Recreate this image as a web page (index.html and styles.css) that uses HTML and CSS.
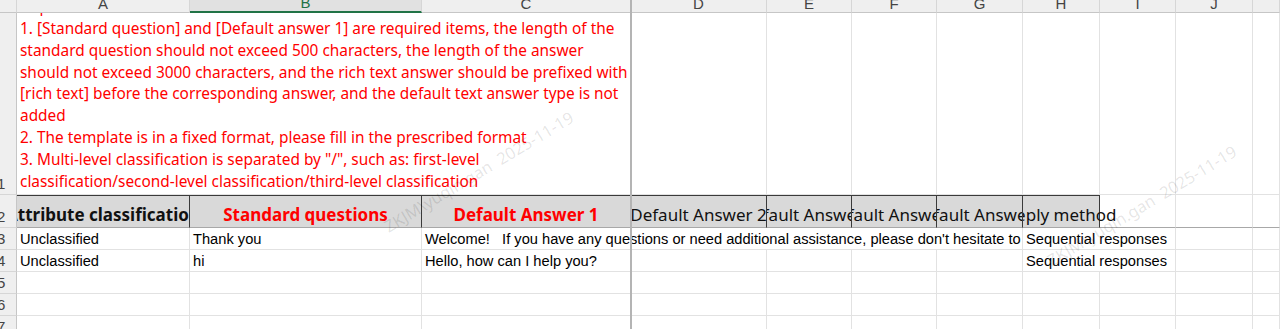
FILE: index.html
```html
<!DOCTYPE html>
<html>
<head>
<meta charset="utf-8">
<link rel="stylesheet" href="styles.css">
</head>
<body>
<div class="sheet">
  <div class="ch corner"></div>
  <div class="ch"><span>A</span></div>
  <div class="ch sel"><span>B</span></div>
  <div class="ch"><span>C</span></div>
  <div class="ch"><span>D</span></div>
  <div class="ch"><span>E</span></div>
  <div class="ch"><span>F</span></div>
  <div class="ch"><span>G</span></div>
  <div class="ch"><span>H</span></div>
  <div class="ch"><span>I</span></div>
  <div class="ch"><span>J</span></div>
  <div class="ch"></div>

  <div class="rh"><span>1</span></div>
  <div class="c note">
    <div class="note-lines">
      <span>Import instructions:</span>
      <span>1. [Standard question] and [Default answer 1] are required items, the length of the</span>
      <span>standard question should not exceed 500 characters, the length of the answer</span>
      <span>should not exceed 3000 characters, and the rich text answer should be prefixed with</span>
      <span>[rich text] before the corresponding answer, and the default text answer type is not</span>
      <span>added</span>
      <span>2. The template is in a fixed format, please fill in the prescribed format</span>
      <span>3. Multi-level classification is separated by "/", such as: first-level</span>
      <span>classification/second-level classification/third-level classification</span>
    </div>
  </div>
  <div class="c"></div><div class="c"></div><div class="c"></div><div class="c"></div><div class="c"></div><div class="c"></div><div class="c"></div><div class="c"></div>

  <div class="rh"><span>2</span></div>
  <div class="c hd bold"><span>Attribute classification</span></div>
  <div class="c hd bold red"><span>Standard questions</span></div>
  <div class="c hd bold red"><span>Default Answer 1</span></div>
  <div class="c hd"><span>Default Answer 2</span></div>
  <div class="c hd"><span>Default Answer 3</span></div>
  <div class="c hd"><span>Default Answer 4</span></div>
  <div class="c hd"><span>Default Answer 5</span></div>
  <div class="c hd last"><span>Reply method</span></div>
  <div class="c hd-empty"></div><div class="c hd-empty"></div><div class="c hd-empty"></div>

  <div class="rh"><span>3</span></div>
  <div class="c dt">Unclassified</div>
  <div class="c dt">Thank you</div>
  <div class="c dt span5">Welcome!&nbsp;&nbsp; If you have any questions or need additional assistance, please don't hesitate to contact us.</div>
  <div class="c dt span2">Sequential responses</div>
  <div class="c"></div><div class="c"></div>

  <div class="rh"><span>4</span></div>
  <div class="c dt">Unclassified</div>
  <div class="c dt">hi</div>
  <div class="c dt">Hello, how can I help you?</div>
  <div class="c"></div><div class="c"></div><div class="c"></div><div class="c"></div>
  <div class="c dt span2">Sequential responses</div>
  <div class="c"></div><div class="c"></div>

  <div class="rh"><span>5</span></div>
  <div class="c"></div><div class="c"></div><div class="c"></div><div class="c"></div><div class="c"></div><div class="c"></div><div class="c"></div><div class="c"></div><div class="c"></div><div class="c"></div><div class="c"></div>

  <div class="rh"><span>6</span></div>
  <div class="c"></div><div class="c"></div><div class="c"></div><div class="c"></div><div class="c"></div><div class="c"></div><div class="c"></div><div class="c"></div><div class="c"></div><div class="c"></div><div class="c"></div>

  <div class="rh"><span>7</span></div>
  <div class="c"></div><div class="c"></div><div class="c"></div><div class="c"></div><div class="c"></div><div class="c"></div><div class="c"></div><div class="c"></div><div class="c"></div><div class="c"></div><div class="c"></div>

  <div class="freeze-v"></div>
  <div class="wm wm1">ZKJM\yuqin.gan&nbsp; 2025-11-19</div>
  <div class="wm wm2">ZKJM\yuqin.gan&nbsp; 2025-11-19</div>
</div>
</body>
</html>
```
FILE: styles.css
```css
* { box-sizing: border-box; }
html, body { margin: 0; padding: 0; background: #fff; overflow: hidden; }
body { width: 1280px; height: 329px; }

.sheet {
  position: relative;
  display: grid;
  grid-template-columns: 17px 173px 232px 209px 136px 85px 85px 86px 77px 76px 77px 27px;
  grid-template-rows: 13px 182px 33px 22px 22px 22px 22px 22px;
  width: 1280px;
  height: 329px;
  overflow: hidden;
  font-family: "Liberation Sans", Arial, sans-serif;
}

.ch {
  background: #efefef;
  border-bottom: 1px solid #c6c6c6;
  border-right: 1px solid #d6d6d6;
  display: flex;
  justify-content: center;
  align-items: flex-end;
  overflow: hidden;
  color: #444;
  font-size: 15px;
}
.ch span { line-height: 15px; margin-bottom: 1px; }
.ch.sel { background: #e1e1e1; border-bottom: 2px solid #217346; color: #217346; }
.ch.corner { background: #efefef; }

.rh {
  background: #efefef;
  border-right: 1px solid #c6c6c6;
  border-bottom: 1px solid #d6d6d6;
  display: flex;
  align-items: flex-end;
  overflow: hidden;
  color: #444;
  font-size: 15px;
}
.rh span { margin-left: -3px; line-height: 20px; }

.c {
  border-right: 1px solid #e2e2e2;
  border-bottom: 1px solid #e2e2e2;
  overflow: hidden;
  min-width: 0;
}

.note {
  grid-column: span 3;
  display: flex;
  flex-direction: column;
  justify-content: flex-end;
  padding: 0 0 1px 3px;
  color: #ff0000;
  font-family: "Noto Sans", "Open Sans", sans-serif;
  font-size: 15.4px;
  line-height: 21.9px;
}
.note-lines { display: flex; flex-direction: column; }
.note-lines span { white-space: nowrap; }

.hd {
  background: #d9d9d9;
  border-top: 1px solid #3a3a3a;
  border-right: 1px solid #3a3a3a;
  border-bottom: 1px solid #a8a8a8;
  display: flex;
  justify-content: center;
  align-items: flex-end;
  white-space: nowrap;
  font-family: "Noto Sans", "Open Sans", sans-serif;
  font-size: 17px;
  line-height: 22px;
  color: #111;
  padding-bottom: 1px;
}
.hd.last { overflow: visible; clip-path: inset(0 -120px 0 0); position: relative; z-index: 1; }
.hd-empty { border-bottom: 1px solid #a8a8a8; }
.bold { font-weight: 700; }
.red { color: #ff0000; }

.dt {
  display: flex;
  align-items: center;
  padding-left: 3px;
  white-space: nowrap;
  font-size: 14.67px;
  color: #000;
  line-height: 21px;
  padding-top: 2px;
}
.span5 { grid-column: span 5; }
.span2 { grid-column: span 2; }

.freeze-v {
  position: absolute;
  left: 630px;
  top: 0;
  width: 2px;
  height: 329px;
  background: #b4b4b4;
}

.wm {
  position: absolute;
  white-space: nowrap;
  font-family: "Noto Sans", sans-serif;
  font-size: 16.5px;
  color: rgba(0, 0, 0, 0.11);
  transform: rotate(-31deg);
  transform-origin: center;
  pointer-events: none;
}
.wm1 { left: 370px; top: 160px; }
.wm2 { left: 1033px; top: 194px; }
```
